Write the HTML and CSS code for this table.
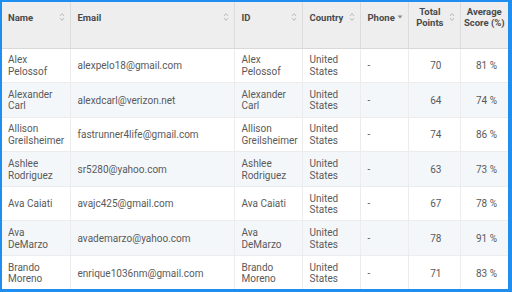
FILE: index.html
```html
<!DOCTYPE html>
<html>
<head>
<meta charset="utf-8">
<link rel="stylesheet" href="styles.css">
</head>
<body>
<div class="frame">
<table class="grid">
<colgroup>
<col style="width:68px"><col style="width:164px"><col style="width:68px"><col style="width:58px"><col style="width:48px"><col style="width:52px"><col style="width:48px">
</colgroup>
<thead>
<tr>
<th><div class="h"><span class="t">Name</span><svg class="sort" viewBox="0 0 6 10"><path d="M1 4 L3 1.5 L5 4 M1 6 L3 8.5 L5 6" /></svg></div></th>
<th><div class="h"><span class="t">Email</span><svg class="sort" viewBox="0 0 6 10"><path d="M1 4 L3 1.5 L5 4 M1 6 L3 8.5 L5 6" /></svg></div></th>
<th><div class="h"><span class="t">ID</span><svg class="sort" viewBox="0 0 6 10"><path d="M1 4 L3 1.5 L5 4 M1 6 L3 8.5 L5 6" /></svg></div></th>
<th><div class="h"><span class="t">Country</span><svg class="sort" viewBox="0 0 6 10"><path d="M1 4 L3 1.5 L5 4 M1 6 L3 8.5 L5 6" /></svg></div></th>
<th><div class="h"><span class="t">Phone</span><svg class="down" viewBox="0 0 6 4"><path d="M0.5 0.5 L5.5 0.5 L3 3.5 Z" /></svg></div></th>
<th><div class="h num"><span class="t c">Total<br>Points</span><svg class="sort" viewBox="0 0 6 10"><path d="M1 4 L3 1.5 L5 4 M1 6 L3 8.5 L5 6" /></svg></div></th>
<th class="lastc"><div class="h last"><span class="t c">Average<br>Score (%)</span></div></th>
</tr>
</thead>
<tbody>
<tr><td>Alex Pelossof</td><td>alexpelo18@gmail.com</td><td>Alex Pelossof</td><td>United States</td><td>-</td><td class="n1">70</td><td class="n2">81 %</td></tr>
<tr><td>Alexander Carl</td><td>alexdcarl@verizon.net</td><td>Alexander Carl</td><td>United States</td><td>-</td><td class="n1">64</td><td class="n2">74 %</td></tr>
<tr><td>Allison Greilsheimer</td><td>fastrunner4life@gmail.com</td><td>Allison Greilsheimer</td><td>United States</td><td>-</td><td class="n1">74</td><td class="n2">86 %</td></tr>
<tr><td>Ashlee Rodriguez</td><td>sr5280@yahoo.com</td><td>Ashlee Rodriguez</td><td>United States</td><td>-</td><td class="n1">63</td><td class="n2">73 %</td></tr>
<tr><td>Ava Caiati</td><td>avajc425@gmail.com</td><td>Ava Caiati</td><td>United States</td><td>-</td><td class="n1">67</td><td class="n2">78 %</td></tr>
<tr><td>Ava DeMarzo</td><td>avademarzo@yahoo.com</td><td>Ava DeMarzo</td><td>United States</td><td>-</td><td class="n1">78</td><td class="n2">91 %</td></tr>
<tr><td>Brando Moreno</td><td>enrique1036nm@gmail.com</td><td>Brando Moreno</td><td>United States</td><td>-</td><td class="n1">71</td><td class="n2">83 %</td></tr>
</tbody>
</table>
</div>
</body>
</html>
```
FILE: styles.css
```css
html, body { margin: 0; padding: 0; background: #fff; }
.frame {
  width: 512px;
  height: 292px;
  box-sizing: border-box;
  border-style: solid;
  border-color: #1e8ff0;
  border-width: 2px 4px 3px 2px;
  overflow: hidden;
  background: #fff;
}
.grid {
  border-collapse: collapse;
  table-layout: fixed;
  width: 506px;
  font-family: Roboto, "Liberation Sans", sans-serif;
  font-size: 10px;
  line-height: 11.5px;
  color: #5a5a5a;
}
.grid th {
  background: #eeeeee;
  height: 46px;
  box-sizing: border-box;
  padding: 4px 5px 0 7px;
  vertical-align: top;
  text-align: left;
  border-left: 1px solid #dcdcdc;
  border-bottom: 1px solid #d8d8d8;
  font-weight: 700;
  color: #4a4a4a;
  font-size: 9.5px;
  line-height: 11px;
}
.grid th:first-child { border-left: none; padding-left: 6px; }
.grid th.lastc { padding-left: 2px; padding-right: 2px; }
.h {
  display: flex;
  align-items: center;
  justify-content: space-between;
  height: 22px;
}
.h.num { justify-content: flex-end; gap: 5px; }
.h.last { justify-content: center; }
.t.c { text-align: center; white-space: nowrap; }
.sort {
  width: 6px;
  height: 10px;
  flex: none;
  fill: none;
  stroke: #b5b5b5;
  stroke-width: 0.9;
}
.down {
  width: 6px;
  height: 4px;
  flex: none;
  fill: #8a8a8a;
}
.grid td {
  height: 34.6px;
  box-sizing: border-box;
  padding: 1px 6px 0 7px;
  vertical-align: middle;
  border-left: 1px solid #ececec;
  border-bottom: 1px solid #ececec;
}
.grid td:first-child { border-left: none; padding-left: 6px; }
.grid tbody tr:nth-child(even) td { background: #f4f7fa; }
.grid td.n1 { text-align: right; padding-right: 18px; }
.grid td.n2 { text-align: right; padding-right: 11px; }
```
